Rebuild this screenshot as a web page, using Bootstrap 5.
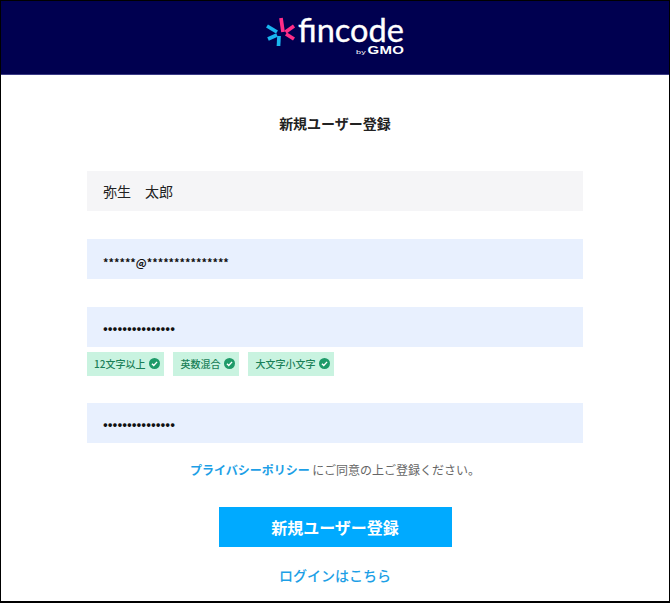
<!DOCTYPE html>
<html lang="ja">
<head>
<meta charset="utf-8">
<title>fincode</title>
<link href="https://cdn.jsdelivr.net/npm/bootstrap@5.3.0/dist/css/bootstrap.min.css" rel="stylesheet">
<style>
html,body{height:603px;overflow:hidden}
body{font-family:"Noto Sans CJK JP","Noto Sans",sans-serif;background:#fff;color:#222}
.frame{height:603px;border:1px solid #000;border-bottom-width:2px;display:flex;flex-direction:column;align-items:center}
.topbar{height:74px;width:100%;background:#000050;border-bottom:1px solid #3a3a85;padding-top:14px}
.brand-name{font-family:"Lato","Noto Sans",sans-serif;font-size:32.500px;line-height:28px;padding-top:1px;color:#fff;-webkit-text-stroke:.35px #fff}
.brand-by{font-family:"Liberation Sans",sans-serif;font-size:10px;line-height:9px;color:#fff;font-weight:700;margin-top:2px;transform:scaleX(1.5);transform-origin:right center;letter-spacing:.2px}
.brand-by span{font-size:6px;font-weight:400;margin-right:1px}
.logo-star{margin-top:1px;margin-right:2px}
.page-title{font-size:14px;line-height:20px;font-weight:700;margin-top:38px;color:#222}
.form-wrap{width:496px;margin-top:38px}
.fld.form-control{height:40px;border:0;border-radius:0;padding:0 16px;font-size:14px;color:#222;background:#e8f0fe;box-shadow:none}
.fld.name-fld{background:#f5f5f7}
.fld.mask{font-size:10.800px;color:#111;font-weight:700;padding-top:5px}
.fld.dots{font-size:12.700px;font-weight:700;color:#111}
.fld-gap{margin-top:28px}
.chips-row{margin-top:5px;gap:9px}
.last-fld{margin-top:27px}
.chip{height:24px;background:#c9f3e0;color:#1a8058;font-size:10px;font-weight:500;padding:0 4px 2px 7px;display:flex;align-items:center;gap:4px}
.policy{font-size:12px;line-height:16px;color:#666;margin-top:19px;text-align:center}
.policy a{color:#1d9fe6;text-decoration:none;font-weight:700}
.cta.btn{width:233px;height:40px;background:#00aaff;color:#fff;border:0;border-radius:0;font-size:16px;font-weight:700;padding:0;margin-top:29px}
.login-link{font-size:14px;line-height:20px;margin-top:18px;font-weight:500;color:#1d9fe6;text-decoration:none}
</style>
</head>
<body>
<div class="frame">
  <header class="topbar d-flex justify-content-center align-items-start">
    <svg class="logo-star" width="30" height="32" viewBox="0 0 30 32" aria-hidden="true">
      <g fill="none" stroke-width="3.700">
        <path d="M15 2 17 16" stroke="#ff2d87"/>
        <path d="M28 10 19.500 16" stroke="#ff2d87"/>
        <path d="M28 23 20 18" stroke="#ff2d87"/>
        <path d="M1 10 11 16" stroke="#19b6f0"/>
        <path d="M2 23 11 19" stroke="#19b6f0"/>
        <path d="M12.500 30 13 20" stroke="#19b6f0"/>
      </g>
    </svg>
    <div class="d-flex flex-column align-items-end">
      <div class="brand-name">fincode</div>
      <div class="brand-by"><span>by</span>GMO</div>
    </div>
  </header>
  <h1 class="page-title mb-0">新規ユーザー登録</h1>
  <form class="form-wrap d-flex flex-column">
    <input class="form-control fld name-fld" type="text" value="弥生　太郎">
    <input class="form-control fld mask fld-gap" type="text" value="******@***************">
    <input class="form-control fld dots fld-gap" type="text" value="•••••••••••••••">
    <div class="d-flex chips-row">
      <span class="chip">12文字以上<svg width="11" height="11" viewBox="0 0 12 12"><circle cx="6" cy="6" r="6" fill="#1e9a68"/><path d="M3.200 6.200 5.200 8.100 8.800 4.200" fill="none" stroke="#fff" stroke-width="1.500"/></svg></span>
      <span class="chip">英数混合<svg width="11" height="11" viewBox="0 0 12 12"><circle cx="6" cy="6" r="6" fill="#1e9a68"/><path d="M3.200 6.200 5.200 8.100 8.800 4.200" fill="none" stroke="#fff" stroke-width="1.500"/></svg></span>
      <span class="chip">大文字小文字<svg width="11" height="11" viewBox="0 0 12 12"><circle cx="6" cy="6" r="6" fill="#1e9a68"/><path d="M3.200 6.200 5.200 8.100 8.800 4.200" fill="none" stroke="#fff" stroke-width="1.500"/></svg></span>
    </div>
    <input class="form-control fld dots last-fld" type="text" value="•••••••••••••••">
  </form>
  <p class="policy mb-0"><a href="#">プライバシーポリシー</a> にご同意の上ご登録ください。</p>
  <button type="button" class="btn cta">新規ユーザー登録</button>
  <a href="#" class="login-link">ログインはこちら</a>
</div>
<script src="https://cdn.jsdelivr.net/npm/bootstrap@5.3.0/dist/js/bootstrap.bundle.min.js"></script>
</body>
</html>
